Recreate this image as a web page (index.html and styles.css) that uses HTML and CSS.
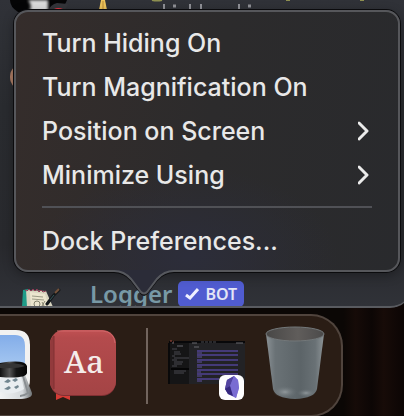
FILE: index.html
```html
<!DOCTYPE html>
<html lang="en">
<head>
<meta charset="utf-8">
<title>Dock menu</title>
<link rel="stylesheet" href="styles.css">
</head>
<body>
<main class="window">
  <svg class="message-top" viewBox="0 0 404 100" width="404" height="100" aria-hidden="true">
    <defs>
      <filter id="soft"><feGaussianBlur stdDeviation="1.5"/></filter>
    </defs>
    <path d="M10 0H67Q65 6 58 12H18Q10 7 10 0Z" fill="#050506"/>
    <path d="M28 0H48V12H29Q33 6 28 0Z" fill="#dcdcdc" filter="url(#soft)"/>
    <path d="M47 12Q51 4 57 3L68 4L64 12Z" fill="#34353a"/>
    <path d="M54 9Q58 7 63 9Z" fill="#e33540"/>
    <path d="M101 0H105L107 10H99Z" fill="#edc45c"/>
    <path d="M103 1V9" stroke="#b98a35"/>
    <path d="M152 0Q157 1 162 0M286 0H290M360 0H364" stroke="#8d8f50" stroke-width="2" fill="none"/>
    <path d="M164 4V9M190 4V9M201 4V9M239 4V9" stroke="#8f9096" stroke-width="2"/>
    <path d="M173 6H176M248 6H251" stroke="#8f9096" stroke-width="3"/>
    <circle cx="24" cy="77" r="14" fill="#ad7d65"/>
  </svg>
  <div class="message">
    <svg class="avatar" viewBox="0 0 40 26" width="40" height="26" aria-hidden="true">
      <path d="M1 9L6 8L7 26H0Z" fill="#1f9c88"/>
      <path d="M4 9L24 10L31 26H5Z" fill="#d9d5c0"/>
      <path d="M8 11L23 13L27 26H9Z" fill="#ebe5ce"/>
      <path d="M3 9L5 10L7 8L9 10L11 8L13 10L15 8L17 11L19 9L21 11L24 10" fill="none" stroke="#8f3c57"/>
      <path d="M10 15L21 16M10 18L22 19" stroke="#9b9a85"/>
      <circle cx="15" cy="23" r="3" fill="none" stroke="#85836f"/>
      <path d="M20 21L22 25M23 20L20 25" stroke="#85836f"/>
      <path d="M37 9L31 15L25 23" stroke="#15191b" stroke-width="3" fill="none" stroke-linecap="round"/>
      <path d="M37 8L33 12" stroke="#75523b" stroke-width="2"/>
      <path d="M32 14L28 19" stroke="#34565b"/>
    </svg>
    <span class="author">Logger</span>
    <span class="tag">
      <svg viewBox="0 0 14 12" width="14" height="12" aria-hidden="true"><path d="M1 7L5 10L13 1" fill="none" stroke="#eef0ff" stroke-width="3"/></svg>
      BOT
    </span>
  </div>
</main>

<footer class="dock">
  <svg class="preview" viewBox="0 0 33 72" width="33" height="72" aria-hidden="true">
    <defs>
      <linearGradient id="sky" x2="0" y2="1"><stop stop-color="#83ade9"/><stop offset="1" stop-color="#b7d5f5"/></linearGradient>
      <linearGradient id="cap"><stop stop-color="#111"/><stop offset=".35" stop-color="#555"/><stop offset=".6" stop-color="#151515"/><stop offset="1" stop-color="#050505"/></linearGradient>
      <linearGradient id="glass"><stop stop-color="#f0f2f3"/><stop offset=".7" stop-color="#d5d9dc"/><stop offset="1" stop-color="#6d7173"/></linearGradient>
    </defs>
    <path d="M0 1H16Q30 1 30 16V50Q30 65 16 65H0Z" fill="#f2f2f1"/>
    <path d="M0 6H15Q25 6 25 17V54H0Z" fill="url(#sky)"/>
    <path d="M0 46H25L32 64Q33 70 17 70H0Z" fill="url(#glass)"/>
    <path d="M2 48H21L24 60Q12 67 0 63V51Z" fill="#e9edf0"/>
    <path d="M4 53L8 50L11 52L8 54ZM12 51L16 49L18 51L15 53ZM4 60L9 57L11 59L8 61ZM14 58L18 56L19 58L16 60Z" fill="#71858f"/>
    <path d="M23 47L28 64Q24 67 20 67" stroke="#898e91" stroke-width="2" fill="none"/>
    <path d="M0 34Q25 30 27 37V44Q26 50 0 48Z" fill="url(#cap)"/>
    <path d="M0 35Q17 33 25 37Q17 40 0 39Z" fill="#343434"/>
  </svg>
  <svg class="dictionary" viewBox="0 0 68 72" width="68" height="72" role="img" aria-label="Dictionary">
    <defs><linearGradient id="cover" x2="0" y2="1"><stop stop-color="#c05052"/><stop offset=".12" stop-color="#b44b4d"/><stop offset="1" stop-color="#a44445"/></linearGradient></defs>
    <path d="M7 60H21V71L14 68L7 71Z" fill="#d53b35"/>
    <rect x="1" y="2" width="66" height="65" rx="14" fill="#813033"/>
    <rect x="1" y="1" width="66" height="65" rx="14" fill="url(#cover)"/>
    <path d="M5 6Q1 10 1 16V51Q1 58 5 61Z" fill="#923a3c"/>
    <path d="M5 7V60" stroke="#803033"/>
    <path d="M8 2H54Q65 3 66 14" fill="none" stroke="#cf686a"/>
    <text x="35" y="44" text-anchor="middle" class="book-letters">Aa</text>
  </svg>
  <div class="dock-line"></div>
  <svg class="minimized" viewBox="0 0 78 60" width="78" height="60" aria-hidden="true">
    <defs><linearGradient id="gem"><stop stop-color="#4c3c9c"/><stop offset="1" stop-color="#9389e6"/></linearGradient></defs>
    <rect x="1" y="1" width="76" height="43" fill="#222225"/>
    <rect x="1" y="1" width="20" height="43" fill="#151516"/>
    <rect x="1" y="1" width="76" height="2" fill="#08080a"/>
    <path d="M1 3V44" stroke="#09090a" stroke-width="2"/>
    <path d="M2 1H4M5 2H6" stroke="#a64a3c"/>
    <path d="M33 2H48" stroke="#4b4b50" stroke-dasharray="3 1"/>
    <path d="M4 3H6M24 3H29M68 3H75M9 6H15M26 7H31" stroke="#68686e"/>
    <path d="M4 9H9M6 12H12M6 14H13M4 16H7M6 18H21M4 20H9M6 22H15M6 24H14M4 26H9M6 31H18M6 33H16" stroke="#48484e"/>
    <rect x="3" y="28" width="18" height="2" fill="#050506"/>
    <g stroke="#443a78" stroke-width="2"><path d="M29 11H70M29 15H70M29 20H70M29 25H70M29 30H70M29 34H70M29 39H51"/></g>
    <path d="M29 13H34M29 17H34M29 22H34M29 27H34M29 32H33M29 36H34M29 41H34" stroke="#6052a0"/>
    <rect x="51" y="35" width="25" height="25" rx="6" fill="#fdfdfe"/>
    <path d="M66 36L59 40L57 49L60 54L68 58L71 48L70 40Z" fill="url(#gem)"/>
    <path d="M66 36L59 40L57 49L62 46Z" fill="#5143a0"/>
    <path d="M66 36L62 46L65 56L68 58L71 48L70 40Z" fill="#796cd2"/>
    <path d="M57 49L62 46L65 56L60 54Z" fill="#34277e"/>
  </svg>
  <svg class="trash" viewBox="0 0 60 74" width="60" height="74" role="img" aria-label="Trash">
    <defs>
      <linearGradient id="bin"><stop stop-color="#8a9195"/><stop offset=".16" stop-color="#6a7276"/><stop offset=".6" stop-color="#5c6468"/><stop offset=".85" stop-color="#697175"/><stop offset="1" stop-color="#8d9497"/></linearGradient>
      <linearGradient id="bin-inside"><stop stop-color="#484746"/><stop offset=".55" stop-color="#605d5b"/><stop offset="1" stop-color="#4b4a4a"/></linearGradient>
      <radialGradient id="bin-foot"><stop stop-color="#aeb5b8" stop-opacity=".6"/><stop offset="1" stop-color="#737b7f" stop-opacity="0"/></radialGradient>
    </defs>
    <path d="M1 8L8 63Q10 72 30 73Q50 72 52 63L59 8Z" fill="url(#bin)"/>
    <ellipse cx="20" cy="66" rx="12" ry="6" fill="url(#bin-foot)"/>
    <ellipse cx="41" cy="67" rx="9" ry="4" fill="url(#bin-foot)"/>
    <ellipse cx="30" cy="8" rx="29" ry="7" fill="url(#bin-inside)" stroke="#73787a"/>
  </svg>
</footer>

<nav class="menu" aria-label="Dock">
  <button class="item" type="button">Turn Hiding On</button>
  <button class="item" type="button">Turn Magnification On</button>
  <button class="item" type="button">Position on Screen
    <svg viewBox="0 0 14 20" width="14" height="20" aria-hidden="true"><path d="M1 2L9 10L1 18"/></svg>
  </button>
  <button class="item" type="button">Minimize Using
    <svg viewBox="0 0 14 20" width="14" height="20" aria-hidden="true"><path d="M1 2L9 10L1 18"/></svg>
  </button>
  <hr class="separator">
  <button class="item" type="button">Dock Preferences...</button>
  <svg class="tail" viewBox="0 0 62 28" width="62" height="28" aria-hidden="true">
    <path d="M0 0V1Q10 2 17 9L27 22Q30 26 33 22L43 9Q50 1 60 1V0Z" fill="#2b2c38"/>
    <path d="M0 2Q10 2 17 10L27 23Q30 27 33 23L43 10Q50 2 60 2" fill="none" stroke="#0b0b0d" stroke-width="2"/>
    <path d="M0 1Q10 1 17 9L27 22Q30 25 33 22L43 9Q50 1 60 1" fill="none" stroke="#56585e" stroke-width="2"/>
  </svg>
</nav>
</body>
</html>
```
FILE: styles.css
```css
* { box-sizing: border-box; }

body {
  margin: 0;
  min-height: 100vh;
  position: relative;
  overflow: hidden;
  background: linear-gradient(90deg, #0b0705 0 85%, #160b08 88%, #0c0605 92%, #170b08 95%, #0b0504 100%);
  font-family: Inter, "Liberation Sans", sans-serif;
}

.window {
  display: flex;
  flex-direction: column;
  justify-content: space-between;
  min-height: 308px;
  margin-right: -8px;
  overflow: hidden;
  border-bottom: 2px solid #595b60;
  border-radius: 0 0 22px 0;
  background: linear-gradient(#303238, #292b2f 35%, #28292d 80%, #303238);
}

.message-top { display: block; }

.message {
  display: flex;
  align-items: center;
  height: 24px;
  padding-left: 22px;
}

.avatar { flex: none; }

.author {
  margin-left: 28px;
  color: #7899a6;
  font: 600 24px/24px "Noto Sans", sans-serif;
}

.tag {
  display: flex;
  align-items: center;
  gap: 6px;
  height: 26px;
  margin-left: 6px;
  padding: 0 7px;
  border-radius: 5px;
  background: #505cd0;
  color: #e4e6f6;
  font: 600 16px/26px "Noto Sans", sans-serif;
}

.dock {
  display: flex;
  align-items: flex-start;
  width: fit-content;
  height: 103px;
  margin-top: 6px;
  padding: 13px 16px 0 0;
  border: 2px solid #50443d;
  border-left: 0;
  border-radius: 0 32px 32px 0;
  background: #2a1d15;
}

.dictionary { margin-left: 16px; }

.book-letters {
  fill: #f4ecea;
  font: 500 31px "Noto Serif", "Liberation Serif", serif;
}

.dock-line {
  width: 2px;
  height: 76px;
  margin: -1px 20px 0 29px;
  background: #71645d;
}

.minimized { margin-top: 11px; }

.trash { margin: -3px 0 0 19px; }

.menu {
  position: absolute;
  top: 10px;
  left: 14px;
  right: 4px;
  padding: 9px 26px 7px;
  border: 2px solid #56575b;
  border-radius: 14px;
  background:
    radial-gradient(ellipse 150px 90px at 45% 95%, #2c2d3a, transparent),
    linear-gradient(100deg, #352d2b, #2c2b2c 50%, #292a2d);
  box-shadow: 0 0 0 1px #0b0b0d, 0 3px 12px #0005;
}

.item {
  display: flex;
  align-items: center;
  justify-content: space-between;
  width: 100%;
  height: 44px;
  padding: 0;
  border: 0;
  background: none;
  color: #e8e8e8;
  font: 500 25px/44px Inter, "Liberation Sans", sans-serif;
  text-align: left;
  white-space: nowrap;
}

.item path {
  fill: none;
  stroke: #ebebeb;
  stroke-width: 3;
  stroke-linecap: round;
  stroke-linejoin: round;
}

.separator {
  height: 2px;
  margin: 9px 0 11px;
  border: 0;
  background: #505156;
}

.tail {
  position: absolute;
  top: 100%;
  left: 98px;
}
```
